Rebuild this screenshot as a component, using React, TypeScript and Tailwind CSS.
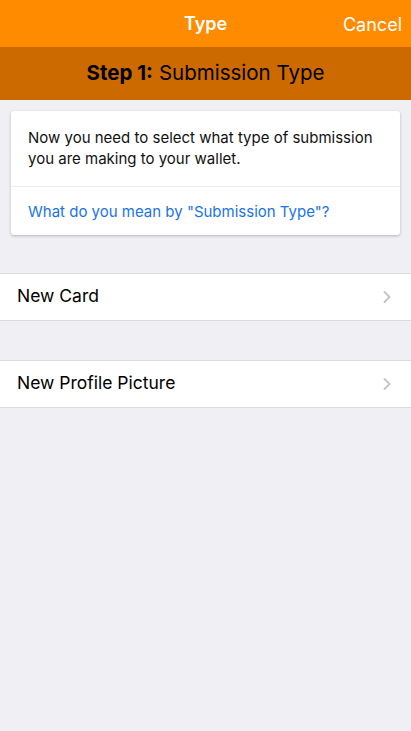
import { ChevronRight } from "lucide-react";

const rows = ["New Card", "New Profile Picture"];

export default function App() {
  return (
    <div
      className="min-h-[731px] bg-[#efeff4] flex flex-col"
      style={{ fontFamily: "Inter, 'Noto Sans', sans-serif" }}
    >
      {/* Nav bar */}
      <div className="h-[47px] bg-[#ff8c00] flex items-center relative">
        <div className="flex-1 text-center text-white font-semibold text-[18px]">Type</div>
        <span className="absolute right-[9px] top-[11px] text-white text-[18px]">Cancel</span>
      </div>

      {/* Step bar */}
      <div className="h-[53px] bg-[#cc6a00] flex items-center justify-center text-[20.5px] text-black">
        <span className="font-bold mr-[6px]">Step 1:</span>
        <span>Submission Type</span>
      </div>

      {/* Info card */}
      <div className="mx-[11px] mt-[11px] bg-white rounded-[3px] shadow-[0_1px_3px_rgba(0,0,0,0.25)]">
        <p className="px-[17px] pt-[16px] pb-[17px] text-[15px] leading-[21px] text-[#111]">
          Now you need to select what type of submission you are making to your wallet.
        </p>
        <div className="h-px bg-[#ededed]" />
        <p className="px-[17px] pt-[14px] pb-[11px] text-[15px] text-[#1a73e8]">
          What do you mean by "Submission Type"?
        </p>
      </div>

      <div className="mt-[38px] flex flex-col gap-[39px]">
        {rows.map((r) => (
          <div
            key={r}
            className="h-[48px] bg-white border-y border-[#dcdce0] flex items-center pl-[17px] pr-[14px]"
          >
            <span className="flex-1 text-[17.5px] text-black">{r}</span>
            <ChevronRight size={20} strokeWidth={2.2} className="text-[#c4c4c8]" />
          </div>
        ))}
      </div>
    </div>
  );
}
